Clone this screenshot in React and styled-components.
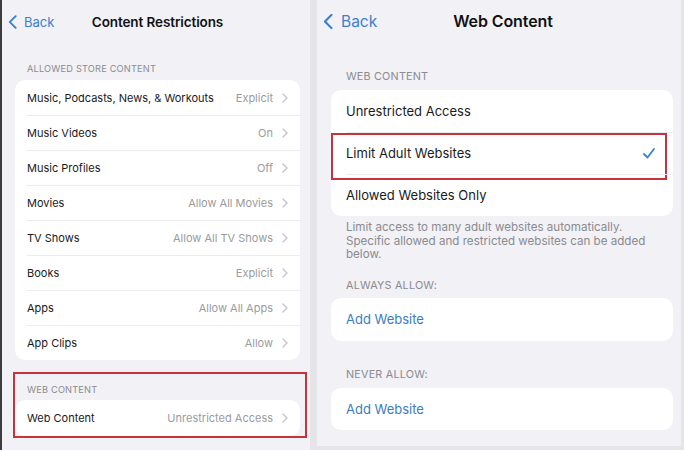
import React from "react";
import styled, { createGlobalStyle, css } from "styled-components";

const Global = createGlobalStyle`
  html, body { margin: 0; padding: 0; }
  body {
    width: 684px; height: 450px; overflow: hidden;
    background: #e4e4e9;
    font-family: Inter, "Noto Sans", "Liberation Sans", sans-serif;
    -webkit-font-smoothing: antialiased;
  }
`;

const Screen = styled.div`
  display: flex;
  width: 684px;
  height: 450px;
  gap: 7px;
  background: #e4e4e9;
`;

const Panel = styled.div`
  display: flex;
  flex-direction: column;
  background: #f1f1f6;
  box-sizing: border-box;
  ${(p) =>
    p.$side === "left"
      ? css`
          width: 310px;
          height: 450px;
          border-left: 2px solid #3d3d40;
          padding: 0 10px 0 13px;
        `
      : css`
          width: 364px;
          height: 446px;
          padding: 0 8px 0 14px;
        `}
`;

const NavBar = styled.div`
  position: relative;
  display: flex;
  align-items: center;
  justify-content: center;
  height: ${(p) => p.$h}px;
  flex-shrink: 0;
`;

const BackButton = styled.div`
  position: absolute;
  left: ${(p) => p.$left}px;
  top: 50%;
  transform: translateY(-50%);
  display: flex;
  align-items: center;
  gap: ${(p) => p.$gap}px;
  color: #3b7fd1;
  font-size: ${(p) => p.$size}px;
  font-weight: 400;
`;

const Title = styled.div`
  font-size: ${(p) => p.$size}px;
  font-weight: 600;
  color: #111113;
  letter-spacing: -0.1px;
  margin-left: ${(p) => p.$shift || 0}px;
`;

const SectionHeader = styled.div`
  font-size: ${(p) => p.$size || 9.2}px;
  line-height: 12px;
  color: #8b8b90;
  text-transform: uppercase;
  letter-spacing: 0.2px;
  padding-left: ${(p) => p.$indent}px;
  margin-top: ${(p) => p.$top}px;
  margin-bottom: ${(p) => p.$bottom}px;
`;

const Card = styled.div`
  background: #ffffff;
  border-radius: 10px;
  display: flex;
  flex-direction: column;
`;

const Row = styled.div`
  position: relative;
  display: flex;
  align-items: center;
  height: ${(p) => p.$h}px;
  padding: 0 ${(p) => p.$pr}px 0 ${(p) => p.$pl}px;
  box-sizing: border-box;
  &::before {
    content: "";
    display: ${(p) => (p.$first ? "none" : "block")};
    position: absolute;
    top: 0;
    left: ${(p) => p.$pl}px;
    right: 0;
    height: 1px;
    background: #ececef;
  }
  ${(p) =>
    p.$marked &&
    css`
      &::after {
        content: "";
        position: absolute;
        top: 1px;
        left: 0;
        right: 6px;
        bottom: -6px;
        border: 2px solid #c8323c;
        pointer-events: none;
      }
    `}
`;

const Label = styled.div`
  flex: 1;
  font-size: ${(p) => p.$size}px;
  color: ${(p) => (p.$link ? "#3b7bc6" : "#1a1a1c")};
  white-space: nowrap;
`;

const Value = styled.div`
  font-size: 11px;
  color: #9b9ba0;
  margin-right: 9px;
  white-space: nowrap;
`;

const Footer = styled.div`
  font-size: 11.6px;
  line-height: 13.5px;
  color: #8b8b90;
  padding: 0 22px 0 15px;
  margin-top: 5px;
`;

const Highlight = styled.div`
  position: relative;
  margin-top: 24px;
  &::after {
    content: "";
    position: absolute;
    top: -12px;
    left: -2px;
    right: -7px;
    bottom: -2px;
    border: 2px solid #c8323c;
    pointer-events: none;
  }
`;

const BackChevron = ({ w, h }) => (
  <svg width={w} height={h} viewBox="0 0 10 17" fill="none" preserveAspectRatio="none">
    <path d="M8.5 1.5 L2 8.5 L8.5 15.5" stroke="#3b7fd1" strokeWidth="2.2" strokeLinecap="round" strokeLinejoin="round" />
  </svg>
);

const Disclosure = () => (
  <svg width="6" height="10" viewBox="0 0 6 10" fill="none">
    <path d="M1 1 L5 5 L1 9" stroke="#c6c6ca" strokeWidth="1.4" strokeLinecap="round" strokeLinejoin="round" />
  </svg>
);

const Check = () => (
  <svg width="12" height="11" viewBox="0 0 12 11" fill="none">
    <path d="M1 6 L4.5 9.5 L11 1" stroke="#3b7fd1" strokeWidth="1.8" strokeLinecap="round" strokeLinejoin="round" />
  </svg>
);

const storeRows = [
  ["Music, Podcasts, News, & Workouts", "Explicit"],
  ["Music Videos", "On"],
  ["Music Profiles", "Off"],
  ["Movies", "Allow All Movies"],
  ["TV Shows", "Allow All TV Shows"],
  ["Books", "Explicit"],
  ["Apps", "Allow All Apps"],
  ["App Clips", "Allow"],
];

const webOptions = ["Unrestricted Access", "Limit Adult Websites", "Allowed Websites Only"];

export default function App() {
  return (
    <>
      <Global />
      <Screen>
        <Panel $side="left">
          <NavBar $h={44}>
            <BackButton $left={-7} $gap={7} $size={13}>
              <BackChevron w={9} h={14} />
              <span>Back</span>
            </BackButton>
            <Title $size={13.5} $shift={0}>Content Restrictions</Title>
          </NavBar>
          <SectionHeader $indent={12} $top={19} $bottom={5}>Allowed Store Content</SectionHeader>
          <Card>
            {storeRows.map(([label, value], i) => (
              <Row key={label} $h={35} $pl={12} $pr={12} $first={i === 0}>
                <Label $size={11}>{label}</Label>
                <Value>{value}</Value>
                <Disclosure />
              </Row>
            ))}
          </Card>
          <Highlight>
            <SectionHeader $indent={12} $top={0} $bottom={4}>Web Content</SectionHeader>
            <Card>
              <Row $h={36} $pl={12} $pr={12} $first>
                <Label $size={11}>Web Content</Label>
                <Value>Unrestricted Access</Value>
                <Disclosure />
              </Row>
            </Card>
          </Highlight>
        </Panel>
        <Panel $side="right">
          <NavBar $h={42}>
            <BackButton $left={-8} $gap={8} $size={15.5}>
              <BackChevron w={10} h={16} />
              <span>Back</span>
            </BackButton>
            <Title $size={16} $shift={2}>Web Content</Title>
          </NavBar>
          <SectionHeader $indent={15} $top={29} $bottom={7} $size={10.8}>Web Content</SectionHeader>
          <Card>
            {webOptions.map((opt, i) => (
              <Row key={opt} $h={42} $pl={15} $pr={18} $first={i === 0} $marked={i === 1}>
                <Label $size={13}>{opt}</Label>
                {i === 1 && <Check />}
              </Row>
            ))}
          </Card>
          <Footer>
            Limit access to many adult websites automatically. Specific allowed and restricted websites can be added below.
          </Footer>
          <SectionHeader $indent={15} $top={18} $bottom={6} $size={10.8}>Always Allow:</SectionHeader>
          <Card>
            <Row $h={43} $pl={15} $pr={15} $first>
              <Label $size={13} $link>Add Website</Label>
            </Row>
          </Card>
          <SectionHeader $indent={15} $top={28} $bottom={7} $size={10.8}>Never Allow:</SectionHeader>
          <Card>
            <Row $h={42} $pl={15} $pr={15} $first>
              <Label $size={13} $link>Add Website</Label>
            </Row>
          </Card>
        </Panel>
      </Screen>
    </>
  );
}
